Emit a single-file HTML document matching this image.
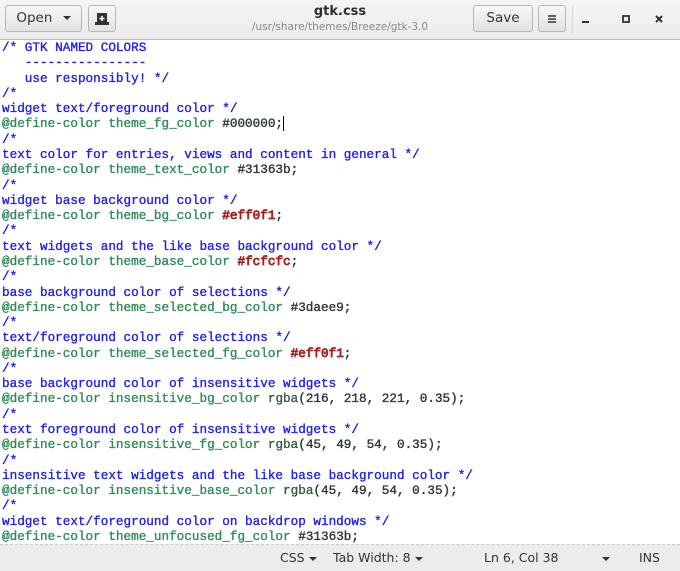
<!DOCTYPE html>
<html><head><style>
body{margin:0;width:680px;height:570px;overflow:hidden;background:#fff;font-family:"Liberation Sans","DejaVu Sans",sans-serif;position:relative}
.hb{position:absolute;left:0;top:0;width:680px;height:39px;background:linear-gradient(#f5f5f5,#ececec);border-bottom:1px solid #bdbdbd}
.btn{position:absolute;top:5px;height:27px;border:1px solid #b6b6b6;border-radius:3px;background:linear-gradient(#f7f7f7,#e3e3e3);box-sizing:border-box;font-size:14px;color:#333;line-height:25px;text-align:center}
.title{position:absolute;left:0;width:680px;text-align:center;top:4px;font-family:"DejaVu Sans",sans-serif;font-weight:bold;font-size:13px;color:#2e2e2e}
.sub{position:absolute;left:0;width:680px;text-align:center;top:21px;font-family:"DejaVu Sans",sans-serif;font-size:10.5px;color:#888}
pre{position:absolute;left:2px;top:40px;margin:0;font-family:"Liberation Mono","DejaVu Sans Mono",monospace;font-size:12.67px;line-height:15.28px;color:#2e3436;-webkit-text-stroke:0.35px}
.c{color:#2020ee}.d{color:#2e8b57}.r{color:#a82020;-webkit-text-stroke:0.8px}.f{color:#2e5e3e}
.sb{position:absolute;left:0;top:544px;width:680px;height:26px;background:#ececec;border-top:1px dashed #ccc;font-family:"DejaVu Sans",sans-serif;font-size:12.5px;color:#333}
.sb span{position:absolute;top:5px}
.ar{display:inline-block;width:0;height:0;border-left:4px solid transparent;border-right:4px solid transparent;border-top:4px solid #333;vertical-align:middle;margin-left:4px}
</style></head><body>
<div class="hb">
<div class="btn" style="left:5px;width:77px;font-family:'DejaVu Sans',sans-serif;font-size:13.5px">Open <span class="ar" style="margin-left:6px"></span></div>
<div class="btn" style="left:88px;width:28px"><svg width="14" height="12" viewBox="0 0 14 12" style="margin-top:7px"><path d="M2 0h10v9h2v3H0V9h2z" fill="#333"/><path d="M7 3v5M4.5 5.5h5" stroke="#fff" stroke-width="1.6"/></svg></div>
<div class="title">gtk.css</div>
<div class="sub">/usr/share/themes/Breeze/gtk-3.0</div>
<div class="btn" style="left:473px;width:60px;font-family:'DejaVu Sans',sans-serif;font-size:13.5px">Save</div>
<div class="btn" style="left:538px;width:28px"><svg width="10" height="10" viewBox="0 0 10 10" style="margin-top:8px"><path d="M1 2h8M1 5h8M1 8h8" stroke="#333" stroke-width="1.5"/></svg></div>
<div style="position:absolute;left:572px;top:6px;width:1px;height:27px;background:#d5d5d5"></div>
<svg style="position:absolute;left:580px;top:10px" width="90" height="20"><path d="M2 12h7" stroke="#333" stroke-width="2"/><rect x="43" y="6" width="6" height="6" fill="none" stroke="#333" stroke-width="1.8"/><path d="M76 6l6 6M82 6l-6 6" stroke="#333" stroke-width="2"/></svg>
</div>
<pre><span class="c">/* GTK NAMED COLORS
   ----------------
   use responsibly! */
/*
widget text/foreground color */</span>
<span class="d">@define-color theme_fg_color</span> #000000;<span style="border-left:1px solid #000"></span>
<span class="c">/*
text color for entries, views and content in general */</span>
<span class="d">@define-color theme_text_color</span> #31363b;
<span class="c">/*
widget base background color */</span>
<span class="d">@define-color theme_bg_color</span> <span class="r">#eff0f1</span>;
<span class="c">/*
text widgets and the like base background color */</span>
<span class="d">@define-color theme_base_color</span> <span class="r">#fcfcfc</span>;
<span class="c">/*
base background color of selections */</span>
<span class="d">@define-color theme_selected_bg_color</span> #3daee9;
<span class="c">/*
text/foreground color of selections */</span>
<span class="d">@define-color theme_selected_fg_color</span> <span class="r">#eff0f1</span>;
<span class="c">/*
base background color of insensitive widgets */</span>
<span class="d">@define-color insensitive_bg_color</span> <span class="f">rgba</span>(216, 218, 221, 0.35);
<span class="c">/*
text foreground color of insensitive widgets */</span>
<span class="d">@define-color insensitive_fg_color</span> <span class="f">rgba</span>(45, 49, 54, 0.35);
<span class="c">/*
insensitive text widgets and the like base background color */</span>
<span class="d">@define-color insensitive_base_color</span> <span class="f">rgba</span>(45, 49, 54, 0.35);
<span class="c">/*
widget text/foreground color on backdrop windows */</span>
<span class="d">@define-color theme_unfocused_fg_color</span> #31363b;</pre>
<div class="sb">
<span style="left:280px">CSS<i class="ar"></i></span>
<span style="left:333px">Tab Width: 8<i class="ar"></i></span>
<span style="left:484px">Ln 6, Col 38</span>
<span style="left:598px"><i class="ar"></i></span>
<span style="left:639px">INS</span>
</div>
</body></html>
